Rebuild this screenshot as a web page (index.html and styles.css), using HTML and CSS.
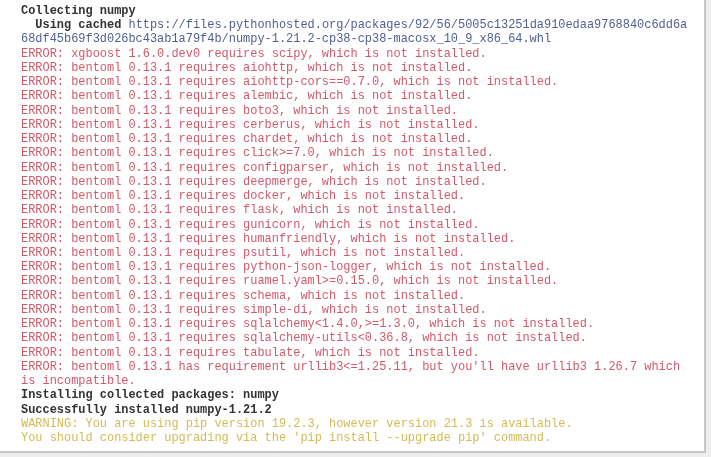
FILE: index.html
```html
<!DOCTYPE html>
<html>
<head>
<meta charset="utf-8">
<link rel="stylesheet" href="styles.css">
</head>
<body>
<div class="frame">
<pre class="term"><span class="b">Collecting numpy</span>
  <span class="b">Using cached</span> <span class="url">https://files.pythonhosted.org/packages/92/56/5005c13251da910edaa9768840c6dd6a</span>
<span class="url">68df45b69f3d026bc43ab1a79f4b/numpy-1.21.2-cp38-cp38-macosx_10_9_x86_64.whl</span>
<span class="err">ERROR: xgboost 1.6.0.dev0 requires scipy, which is not installed.
ERROR: bentoml 0.13.1 requires aiohttp, which is not installed.
ERROR: bentoml 0.13.1 requires aiohttp-cors==0.7.0, which is not installed.
ERROR: bentoml 0.13.1 requires alembic, which is not installed.
ERROR: bentoml 0.13.1 requires boto3, which is not installed.
ERROR: bentoml 0.13.1 requires cerberus, which is not installed.
ERROR: bentoml 0.13.1 requires chardet, which is not installed.
ERROR: bentoml 0.13.1 requires click&gt;=7.0, which is not installed.
ERROR: bentoml 0.13.1 requires configparser, which is not installed.
ERROR: bentoml 0.13.1 requires deepmerge, which is not installed.
ERROR: bentoml 0.13.1 requires docker, which is not installed.
ERROR: bentoml 0.13.1 requires flask, which is not installed.
ERROR: bentoml 0.13.1 requires gunicorn, which is not installed.
ERROR: bentoml 0.13.1 requires humanfriendly, which is not installed.
ERROR: bentoml 0.13.1 requires psutil, which is not installed.
ERROR: bentoml 0.13.1 requires python-json-logger, which is not installed.
ERROR: bentoml 0.13.1 requires ruamel.yaml&gt;=0.15.0, which is not installed.
ERROR: bentoml 0.13.1 requires schema, which is not installed.
ERROR: bentoml 0.13.1 requires simple-di, which is not installed.
ERROR: bentoml 0.13.1 requires sqlalchemy&lt;1.4.0,&gt;=1.3.0, which is not installed.
ERROR: bentoml 0.13.1 requires sqlalchemy-utils&lt;0.36.8, which is not installed.
ERROR: bentoml 0.13.1 requires tabulate, which is not installed.
ERROR: bentoml 0.13.1 has requirement urllib3&lt;=1.25.11, but you'll have urllib3 1.26.7 which
is incompatible.</span>
<span class="b">Installing collected packages: numpy</span>
<span class="b">Successfully installed numpy-1.21.2</span>
<span class="warn">WARNING: You are using pip version 19.2.3, however version 21.3 is available.
You should consider upgrading via the 'pip install --upgrade pip' command.</span></pre>
</div>
</body>
</html>
```
FILE: styles.css
```css
html, body {
  margin: 0;
  padding: 0;
  background: #ededed;
  width: 711px;
  height: 457px;
  overflow: hidden;
}
.frame {
  width: 704px;
  height: 451px;
  background: #ffffff;
  border-right: 2px solid #c6c6c6;
  border-bottom: 2px solid #c6c6c6;
  box-sizing: content-box;
}
.term {
  margin: 0;
  padding: 4px 0 0 21px;
  font-family: "Liberation Mono", "Courier New", monospace;
  font-size: 11.95px;
  line-height: 14.23px;
  color: #3a3a3a;
  white-space: pre;
  filter: blur(0.35px);
}
.b {
  font-weight: bold;
  color: #333333;
}
.url {
  color: #4e5f92;
}
.err {
  color: #d05a6a;
}
.warn {
  color: #d3bb56;
}
```
